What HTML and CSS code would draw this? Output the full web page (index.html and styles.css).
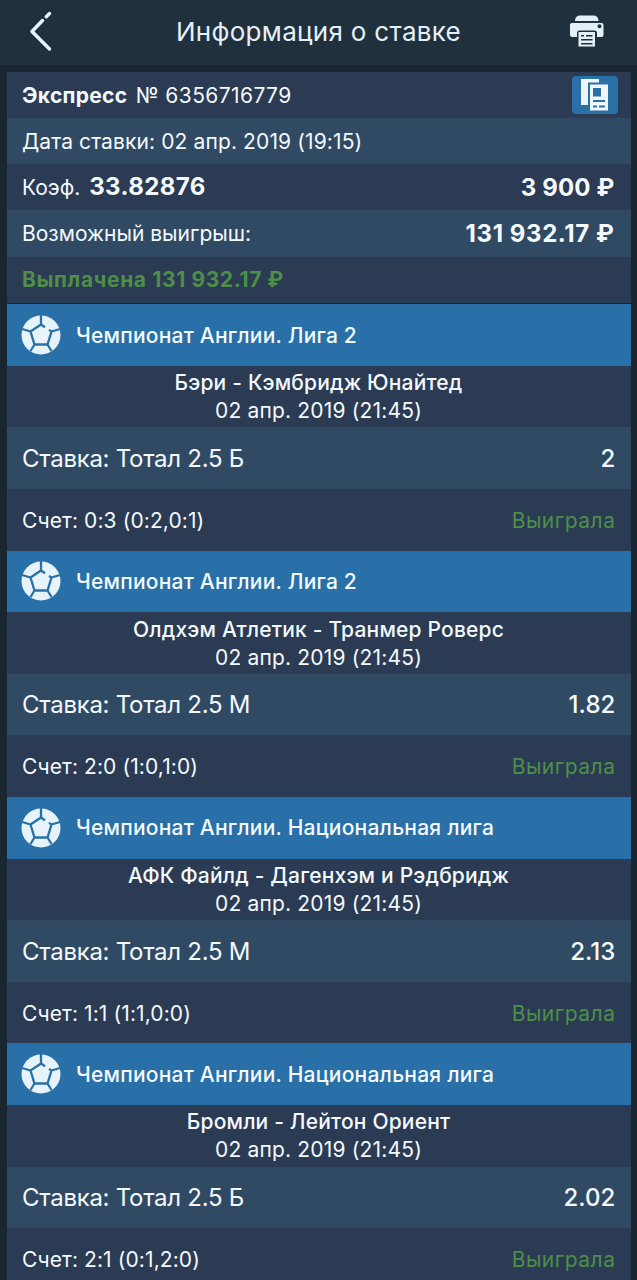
FILE: index.html
```
<!DOCTYPE html>
<html lang="ru">

<head>
  <meta charset="UTF-8">
  <meta name="viewport" content="width=device-width, initial-scale=1.0">
  <title>Информация о ставке</title>
  <link rel="stylesheet" href="styles.css">
</head>

<body>
  <svg class="sprite" width="0" height="0">
    <symbol id="ball" viewBox="0 0 40 40">
      <circle class="ball-bg" cx="20" cy="20" r="19.5" />
      <path class="ball-seam" d="M20 0V9.500M20 9.500L9.500 16.500L13.500 29.500H26.500L30.500 16.500L28 14.900M24 12.200L20 9.500M9.500 16.500L1 14M30.500 16.500L39 14M13.500 29.500L9.500 36M26.500 29.500L30.500 36" />
    </symbol>
  </svg>

  <header>
    <a class="back" href="#" aria-label="Назад">
      <svg width="24" height="42" viewBox="0 0 24 42">
        <path d="M20.500 3.500L17.300 6.700M13.500 10.500L3 21.500L20.500 39" />
      </svg>
    </a>
    <h1>Информация о ставке</h1>
    <a class="print" href="#" aria-label="Печать">
      <svg width="34" height="32" viewBox="0 0 34 32">
        <path d="M5 6C5 2.500 7 .5 10.500 .5H23C26.500 .5 28.500 2.500 28.500 6Z" />
        <path fill-rule="evenodd" d="M2 8H31.500Q33.500 8 33.500 10V20Q33.500 22 31.500 22H27V18Q27 15.500 24.500 15.500H9.500Q7 15.500 7 18V22H2Q0 22 0 20V10Q0 8 2 8ZM29.500 9.300A2 2 0 1 0 29.500 13.300A2 2 0 1 0 29.500 9.300Z" />
        <path fill-rule="evenodd" d="M8.500 17H25V31.500H8.500ZM11 20V21.500H14V20ZM16 20V21.500H22.500V20ZM11 24V25.500H22.500V24ZM11 28V29.500H22.500V28Z" />
      </svg>
    </a>
  </header>

  <main>
    <section class="summary">
      <div class="row">
        <span class="number"><b>Экспресс</b> № 6356716779</span>
        <a class="copy" href="#" aria-label="Копировать">
          <svg width="28" height="32" viewBox="0 0 28 32">
            <path d="M0 0H18V3.500H7V26H0Z" />
            <path fill-rule="evenodd" d="M9 5.500H27V31.500H9ZM12 9V17.500H20V9ZM12 21V23H24V21ZM12 26.500V28.500H16V26.500ZM18 26.500V28.500H24V26.500Z" />
          </svg>
        </a>
      </div>
      <div class="row light">
        <span class="date">Дата ставки: 02 апр. 2019 (19:15)</span>
      </div>
      <div class="row">
        <span class="label">Коэф. <b class="big coef">33.82876</b></span>
        <b class="big">3 900 ₽</b>
      </div>
      <div class="row light">
        <span class="label">Возможный выигрыш:</span>
        <b class="big sum">131 932.17 ₽</b>
      </div>
      <div class="row">
        <b class="paid">Выплачена 131 932.17 ₽</b>
      </div>
    </section>

    <section class="bet">
      <h2><svg class="ball"><use href="#ball" /></svg><span>Чемпионат Англии. Лига 2</span></h2>
      <div class="match">
        <p class="teams">Бэри - Кэмбридж Юнайтед</p>
        <p class="time">02 апр. 2019 (21:45)</p>
      </div>
      <div class="stake">
        <span>Ставка: Тотал 2.5 Б</span>
        <span class="odds">2</span>
      </div>
      <div class="score">
        <span>Счет: 0:3 (0:2,0:1)</span>
        <span class="result">Выиграла</span>
      </div>
    </section>

    <section class="bet">
      <h2><svg class="ball"><use href="#ball" /></svg><span>Чемпионат Англии. Лига 2</span></h2>
      <div class="match">
        <p class="teams">Олдхэм Атлетик - Транмер Роверс</p>
        <p class="time">02 апр. 2019 (21:45)</p>
      </div>
      <div class="stake">
        <span>Ставка: Тотал 2.5 М</span>
        <span class="odds">1.82</span>
      </div>
      <div class="score">
        <span>Счет: 2:0 (1:0,1:0)</span>
        <span class="result">Выиграла</span>
      </div>
    </section>

    <section class="bet">
      <h2><svg class="ball"><use href="#ball" /></svg><span>Чемпионат Англии. Национальная лига</span></h2>
      <div class="match">
        <p class="teams">АФК Файлд - Дагенхэм и Рэдбридж</p>
        <p class="time">02 апр. 2019 (21:45)</p>
      </div>
      <div class="stake">
        <span>Ставка: Тотал 2.5 М</span>
        <span class="odds">2.13</span>
      </div>
      <div class="score">
        <span>Счет: 1:1 (1:1,0:0)</span>
        <span class="result">Выиграла</span>
      </div>
    </section>

    <section class="bet">
      <h2><svg class="ball"><use href="#ball" /></svg><span>Чемпионат Англии. Национальная лига</span></h2>
      <div class="match">
        <p class="teams">Бромли - Лейтон Ориент</p>
        <p class="time">02 апр. 2019 (21:45)</p>
      </div>
      <div class="stake">
        <span>Ставка: Тотал 2.5 Б</span>
        <span class="odds">2.02</span>
      </div>
      <div class="score">
        <span>Счет: 2:1 (0:1,2:0)</span>
        <span class="result">Выиграла</span>
      </div>
    </section>
  </main>
</body>

</html>
```
FILE: styles.css
```
* {
  box-sizing: border-box;
}

body {
  margin: 0;
  height: 1280px;
  overflow: hidden;
  background-color: #1a262f;
  color: #f4f9fd;
  font-family: Inter, "Liberation Sans", sans-serif;
  font-size: 21px;
  line-height: 28px;
  letter-spacing: 0.18px;
}

.sprite {
  display: block;
}

header {
  display: grid;
  grid-template-columns: 1fr auto 1fr;
  align-items: center;
  height: 65px;
  padding: 0 33px 3px 29px;
  background-color: #21303d;
}

header h1 {
  margin: 1px 0 0 4px;
  font-size: 26px;
  font-weight: 400;
  letter-spacing: 0.3px;
  color: #e4f1f9;
}

header svg,
.copy svg {
  display: block;
}

.back path {
  fill: none;
  stroke: #e8f4fb;
  stroke-width: 3.5;
  stroke-linecap: round;
  stroke-linejoin: round;
}

.print {
  justify-self: end;
}

.print path {
  fill: #e4f0f8;
}

main {
  margin: 6.500px 6.500px 0 6.500px;
}

.summary {
  margin-bottom: 1.300px;
}

.row {
  display: flex;
  align-items: center;
  justify-content: space-between;
  height: 46.300px;
  padding: 1px 16px 0 15.500px;
  background-color: #2b3b53;
}

.light,
.stake {
  background-color: #304a64;
}

.number {
  padding-top: 1px;
  letter-spacing: 0.4px;
}

.number b {
  margin-right: 2px;
  letter-spacing: 0.3px;
}

.date {
  padding-top: 1px;
  letter-spacing: 0.12px;
}

.label {
  letter-spacing: 0;
}

.copy {
  display: flex;
  align-items: center;
  justify-content: center;
  width: 46px;
  height: 38px;
  margin-right: -3.500px;
  border-radius: 4px;
  background-color: #2a71a8;
}

.copy path {
  fill: #eff7fc;
}

.big {
  font-size: 24px;
}

.coef {
  margin-left: 3px;
  letter-spacing: 0.4px;
}

.sum {
  letter-spacing: 0.6px;
}

.paid {
  letter-spacing: 0.63px;
}

.paid,
.result {
  color: #4d8f49;
}

.bet > * {
  height: 61.600px;
}

.bet h2 {
  display: flex;
  align-items: center;
  gap: 15px;
  margin: 0;
  padding: 0 14.500px;
  background-color: #2870a7;
  font-size: 21px;
  font-weight: 500;
  letter-spacing: 0.22px;
}

.bet h2 span {
  padding-top: 1px;
}

.ball {
  width: 40px;
  height: 40px;
}

.ball-bg {
  fill: #e6f3fa;
}

.ball-seam {
  fill: none;
  stroke: #2870a7;
  stroke-width: 2.300;
}

.match {
  padding-top: 3.400px;
  background-color: #2b3b53;
  text-align: center;
}

.match p {
  margin: 0;
}

.teams {
  font-weight: 500;
}

.stake,
.score {
  display: flex;
  align-items: center;
  justify-content: space-between;
  padding: 1px 15px 0 15.500px;
}

.stake {
  font-size: 24px;
  letter-spacing: -0.27px;
}

.odds {
  font-weight: 500;
  letter-spacing: 0.1px;
}

.score {
  padding-top: 2px;
  background-color: #2b3b53;
  letter-spacing: 0.1px;
}

.result {
  letter-spacing: 0.5px;
}
```
